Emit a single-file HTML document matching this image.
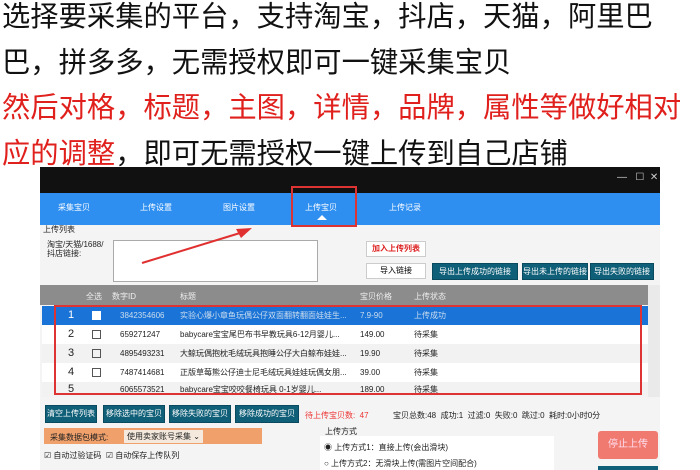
<!DOCTYPE html><html><head><meta charset="utf-8"><style>
*{margin:0;padding:0;box-sizing:border-box}
body{width:700px;height:470px;overflow:hidden;background:#fff;font-family:"Liberation Sans","Noto Sans CJK SC",sans-serif;position:relative}
.t{position:absolute;left:2px;top:-6px;font-size:28.3px;line-height:45.5px;color:#111;width:720px;white-space:nowrap}
.r{color:#e0201c}
.a{position:absolute}
.s{font-size:8px;color:#222;white-space:nowrap}
.btn{position:absolute;background:#0f5f78;color:#fff;font-size:8px;text-align:center;line-height:15px;border:1px solid #0a4a5e}
.row{position:absolute;left:42px;width:606px;height:19px;font-size:8px;line-height:19px;color:#222}
.row span{position:absolute}
</style></head><body>
<div class="t">选择要采集的平台，支持淘宝，抖店，天猫，阿里巴<br>巴，拼多多，无需授权即可一键采集宝贝<br><span class="r">然后对格，标题，主图，详情，品牌，属性等做好相对</span><br><span class="r">应的调整</span>，即可无需授权一键上传到自己店铺</div>
<div class="a" style="left:40px;top:167px;width:620px;height:303px;background:#f4f4f4"></div>
<div class="a" style="left:40px;top:167px;width:620px;height:26px;background:#111"></div>
<div class="a s" style="left:617px;top:172px;color:#ccc;font-size:10px">—&nbsp;&nbsp;&nbsp;☐&nbsp;&nbsp;✕</div>
<div class="a" style="left:40px;top:193px;width:620px;height:32px;background:#2e8ff0"></div>
<div class="a s" style="left:58px;top:202px;color:#fff">采集宝贝</div>
<div class="a s" style="left:140px;top:202px;color:#fff">上传设置</div>
<div class="a s" style="left:223px;top:202px;color:#fff">图片设置</div>
<div class="a s" style="left:305px;top:202px;color:#fff">上传宝贝</div>
<div class="a s" style="left:389px;top:202px;color:#fff">上传记录</div>
<div class="a" style="left:317px;top:215px;width:0;height:0;border-left:5px solid transparent;border-right:5px solid transparent;border-bottom:5px solid #fff"></div>
<div class="a" style="left:291px;top:186px;width:66px;height:41px;border:2px solid #d33"></div>
<div class="a s" style="left:43px;top:224px">上传列表</div>
<div class="a s" style="left:47px;top:240px;line-height:9px">淘宝/天猫/1688/<br>抖店链接:</div>
<div class="a" style="left:113px;top:240px;width:205px;height:42px;background:#fff;border:1px solid #aaa"></div>
<svg class="a" style="left:140px;top:225px" width="120" height="40"><line x1="2" y1="38" x2="100" y2="8" stroke="#e03030" stroke-width="2"/><polygon points="112,3 96,4 101,13" fill="#e03030"/></svg>
<div class="a" style="left:366px;top:241px;width:60px;height:16px;background:#fff;border:1px solid #ccc;color:#d22;font-size:8px;font-weight:bold;text-align:center;line-height:14px">加入上传列表</div>
<div class="a" style="left:366px;top:263px;width:60px;height:16px;background:#fff;border:1px solid #ccc;font-size:8px;text-align:center;line-height:14px">导入链接</div>
<div class="btn" style="left:432px;top:263px;width:86px">导出上传成功的链接</div>
<div class="btn" style="left:522px;top:263px;width:66px">导出未上传的链接</div>
<div class="btn" style="left:590px;top:263px;width:64px">导出失败的链接</div>
<div class="a" style="left:40px;top:285px;width:608px;height:20px;background:#8c8c8c"></div>
<div class="a s" style="left:86px;top:291px;color:#eee">全选</div>
<div class="a s" style="left:112px;top:291px;color:#eee">数字ID</div>
<div class="a s" style="left:180px;top:291px;color:#eee">标题</div>
<div class="a s" style="left:360px;top:291px;color:#eee">宝贝价格</div>
<div class="a s" style="left:414px;top:291px;color:#eee">上传状态</div>
<div class="a" style="left:648px;top:285px;width:12px;height:112px;background:#eaeaea"></div>
<div class="row" style="top:306px;background:#1a73d6;color:#cde"><span style="left:26px;font-size:11px;color:#fff">1</span><span style="left:50px;top:5px;width:9px;height:9px;background:#fff"></span><span style="left:78px">3842354606</span><span style="left:138px">实验心爆小章鱼玩偶公仔双面翻转翻面娃娃生...</span><span style="left:318px">7.9-90</span><span style="left:372px">上传成功</span></div>
<div class="row" style="top:325px;background:#fff"><span style="left:26px;font-size:11px">2</span><span style="left:50px;top:5px;width:9px;height:9px;border:1px solid #555"></span><span style="left:78px">659271247</span><span style="left:138px">babycare宝宝尾巴布书早教玩具6-12月婴儿...</span><span style="left:318px">149.00</span><span style="left:372px">待采集</span></div>
<div class="row" style="top:344px;background:#f2f2f2"><span style="left:26px;font-size:11px">3</span><span style="left:50px;top:5px;width:9px;height:9px;border:1px solid #555"></span><span style="left:78px">4895493231</span><span style="left:138px">大鲸玩偶抱枕毛绒玩具抱睡公仔大白鲸布娃娃...</span><span style="left:318px">19.90</span><span style="left:372px">待采集</span></div>
<div class="row" style="top:363px;background:#fff"><span style="left:26px;font-size:11px">4</span><span style="left:50px;top:5px;width:9px;height:9px;border:1px solid #555"></span><span style="left:78px">7487414681</span><span style="left:138px">正版草莓熊公仔迪士尼毛绒玩具娃娃玩偶女朋...</span><span style="left:318px">39.00</span><span style="left:372px">待采集</span></div>
<div class="row" style="top:382px;height:15px;background:#f2f2f2;line-height:15px"><span style="left:26px;font-size:11px">5</span><span style="left:78px">6065573521</span><span style="left:138px">babycare宝宝咬咬餐椅玩具 0-1岁婴儿...</span><span style="left:318px">189.00</span><span style="left:372px">待采集</span></div>
<div class="a" style="left:54px;top:305px;width:588px;height:90px;border:2px solid #d33"></div>
<div class="btn" style="left:45px;top:405px;width:52px;height:18px;line-height:16px">清空上传列表</div>
<div class="btn" style="left:103px;top:405px;width:62px;height:18px;line-height:16px">移除选中的宝贝</div>
<div class="btn" style="left:169px;top:405px;width:62px;height:18px;line-height:16px">移除失败的宝贝</div>
<div class="btn" style="left:235px;top:405px;width:64px;height:18px;line-height:16px">移除成功的宝贝</div>
<div class="a s" style="left:305px;top:410px;color:#e33">待上传宝贝数: &nbsp;47</div>
<div class="a s" style="left:393px;top:410px">宝贝总数:48 &nbsp;成功:1 &nbsp;过滤:0 &nbsp;失败:0 &nbsp;跳过:0 &nbsp;耗时:0小时0分</div>
<div class="a" style="left:44px;top:428px;width:218px;height:16px;background:#f0a06a"></div>
<div class="a s" style="left:50px;top:432px">采集数据包模式:</div>
<div class="a s" style="left:124px;top:430px;background:#f4e9dc;padding:1px 3px">使用卖家账号采集 ⌄</div>
<div class="a s" style="left:44px;top:450px">☑ 自动过验证码 &nbsp;☑ 自动保存上传队列</div>
<div class="a s" style="left:325px;top:426px">上传方式</div>
<div class="a" style="left:320px;top:436px;width:234px;height:34px;background:#fff"></div>
<div class="a s" style="left:324px;top:442px">◉ 上传方式1：直接上传(会出滑块)</div>
<div class="a s" style="left:324px;top:458px">○ 上传方式2：无滑块上传(需图片空间配合)</div>
<div class="a" style="left:598px;top:431px;width:60px;height:28px;background:#f07a70;border-radius:3px;color:#fde;font-size:10px;text-align:center;line-height:28px">停止上传</div>
<div class="a" style="left:598px;top:466px;width:60px;height:4px;background:#0f5f78"></div>
</body></html>
